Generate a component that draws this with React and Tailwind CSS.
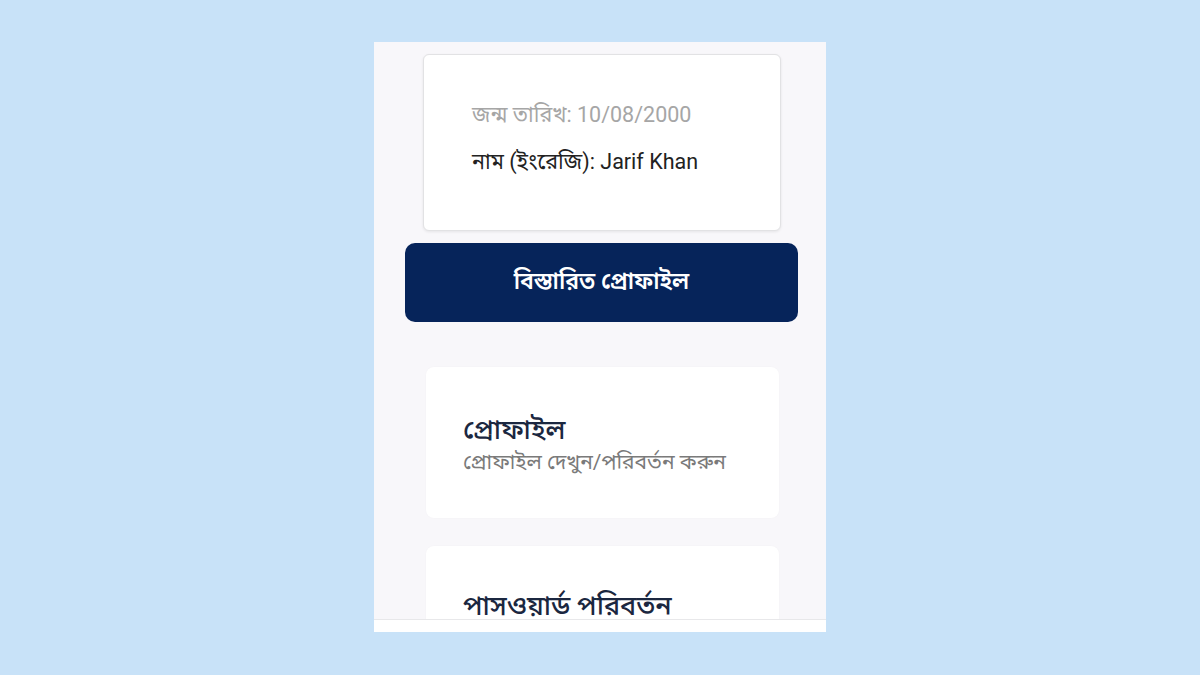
export default function App() {
  const font = { fontFamily: 'Roboto, "Noto Sans", "Noto Sans Bengali", sans-serif' };
  return (
    <div className="w-[1200px] h-[675px] bg-[#c8e2f8] flex justify-center pt-[42px]" style={font}>
      <div className="w-[452px] h-[590px] bg-[#f8f7fa] flex flex-col overflow-hidden">
        <div className="flex-1 min-h-0 overflow-hidden flex flex-col">
          {/* basic info card */}
          <div className="ml-[49px] w-[358px] mt-[12px] h-[177px] shrink-0 bg-white rounded-[6px] border border-[#e2e2e4] shadow-[0_1px_3px_rgba(0,0,0,0.08)] flex flex-col justify-center pl-[48px] pb-[8px] gap-[19px]">
            <div className="text-[21.5px] leading-[28px] text-[#a6a6a6]">জন্ম তারিখ: 10/08/2000</div>
            <div className="text-[21.5px] leading-[28px] text-[#222222]">নাম (ইংরেজি): Jarif Khan</div>
          </div>

          {/* details button */}
          <button className="ml-[31px] w-[393px] mt-[12px] h-[79px] shrink-0 bg-[#06245a] rounded-[10px] text-white text-[23px] font-semibold flex items-center justify-center">
            বিস্তারিত প্রোফাইল
          </button>

          {/* menu cards */}
          <div className="ml-[52px] w-[353px] mt-[45px] h-[151px] shrink-0 bg-white rounded-[8px] shadow-[0_0_2px_rgba(0,0,0,0.03)] flex flex-col justify-center pl-[37px] pt-[2px]">
            <div className="text-[27px] leading-[36px] font-medium text-[#1b2740]">প্রোফাইল</div>
            <div className="text-[21px] leading-[28px] text-[#7a7a7a]">প্রোফাইল দেখুন/পরিবর্তন করুন</div>
          </div>

          <div className="ml-[52px] w-[353px] mt-[28px] h-[120px] shrink-0 bg-white rounded-[8px] shadow-[0_0_2px_rgba(0,0,0,0.03)] flex flex-col pl-[37px] pt-[42px]">
            <div className="text-[27px] leading-[36px] font-medium text-[#1b2740]">পাসওয়ার্ড পরিবর্তন</div>
          </div>
        </div>
        <div className="h-[13px] shrink-0 bg-white border-t border-[#e8e8ea]" />
      </div>
    </div>
  );
}
